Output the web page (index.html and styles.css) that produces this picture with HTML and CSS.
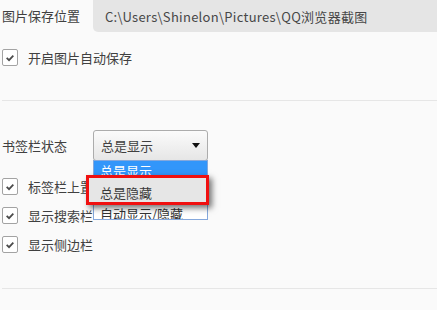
FILE: index.html
```html
<!DOCTYPE html>
<html lang="zh">
<head>
<meta charset="utf-8">
<link rel="stylesheet" href="styles.css">
</head>
<body>
<div class="page">
  <section class="section first">
    <div class="path-row">
      <span class="label">图片保存位置</span>
      <div class="path">C:\Users\Shinelon\Pictures\QQ浏览器截图</div>
    </div>
    <div class="check-row first-check">
      <span class="box"><svg viewBox="0 0 16 16" width="16" height="16"><path d="M4.2 8.3 L6.9 11 L11.8 5.8" fill="none" stroke="#4a4a4a" stroke-width="2"/></svg></span>
      <span>开启图片自动保存</span>
    </div>
  </section>
  <section class="section second">
    <div class="select-row">
      <span class="label">书签栏状态</span>
      <div class="select-wrap">
        <div class="select"><span>总是显示</span><span class="arrow"></span></div>
        <ul class="list">
          <li class="item active">总是显示</li>
          <li class="item mid">总是隐藏</li>
          <li class="item last">自动显示/隐藏</li>
        </ul>
        <div class="highlight"><span>总是隐藏</span></div>
      </div>
    </div>
    <div class="checks">
      <div class="check-row">
        <span class="box"><svg viewBox="0 0 16 16" width="16" height="16"><path d="M4.2 8.3 L6.9 11 L11.8 5.8" fill="none" stroke="#4a4a4a" stroke-width="2"/></svg></span>
        <span>标签栏上置顶</span>
      </div>
      <div class="check-row">
        <span class="box"><svg viewBox="0 0 16 16" width="16" height="16"><path d="M4.2 8.3 L6.9 11 L11.8 5.8" fill="none" stroke="#4a4a4a" stroke-width="2"/></svg></span>
        <span>显示搜索栏</span>
      </div>
      <div class="check-row">
        <span class="box"><svg viewBox="0 0 16 16" width="16" height="16"><path d="M4.2 8.3 L6.9 11 L11.8 5.8" fill="none" stroke="#4a4a4a" stroke-width="2"/></svg></span>
        <span>显示侧边栏</span>
      </div>
    </div>
  </section>
</div>
</body>
</html>
```
FILE: styles.css
```css
* { box-sizing: border-box; }
html, body { margin: 0; padding: 0; }
body {
  background: #fafafa;
  font-family: "Noto Sans CJK SC", "Microsoft YaHei", sans-serif;
  font-size: 13px;
  color: #404040;
  width: 437px;
  height: 310px;
  overflow: hidden;
}
.page { padding-left: 2px; }
.section.first {
  height: 101px;
  border-bottom: 1px solid #e6e6e6;
}
.path-row {
  display: flex;
  align-items: center;
  height: 32px;
}
.label { width: 91px; flex: none; line-height: 16px; }
.path {
  flex: 1;
  height: 32px;
  background: #e5e5e5;
  border-bottom-left-radius: 5px;
  display: flex;
  align-items: center;
  padding-left: 12px;
  color: #474747;
  letter-spacing: 0.28px;
}
.check-row {
  display: flex;
  align-items: center;
  gap: 10px;
  height: 17px;
}
.first-check { margin-top: 17px; }
.box {
  width: 16px;
  height: 17px;
  border: 1px solid #a3a3a3;
  border-radius: 2px;
  background: #fff;
  display: flex;
  align-items: center;
  justify-content: center;
  flex: none;
}
.box svg { display: block; width: 15px; height: 15px; }
.section.second {
  height: 188px;
  border-bottom: 1px solid #e6e6e6;
  padding-top: 29px;
}
.select-row {
  display: flex;
  align-items: center;
  height: 31px;
}
.select-wrap { position: relative; }
.select {
  width: 115px;
  height: 31px;
  border: 1px solid #acacac;
  border-radius: 3px;
  background: linear-gradient(#fbfbfb, #e6e6e6);
  display: flex;
  align-items: center;
  justify-content: space-between;
  padding: 0 7px 0 7px;
}
.arrow {
  width: 0;
  height: 0;
  border-left: 4.5px solid transparent;
  border-right: 4.5px solid transparent;
  border-top: 5px solid #111;
}
.list {
  position: absolute;
  left: 0;
  top: 30px;
  width: 115px;
  margin: 0;
  padding: 0;
  list-style: none;
  background: #fff;
  border: 1px solid #85a8dc;
  height: 60px;
  overflow: hidden;
}
.item {
  height: 19px;
  line-height: 19px;
  padding-left: 6px;
  color: #333;
  overflow: hidden;
}
.item.active { background: #3296fa; color: #fff; }
.item.mid { height: 22px; line-height: 22px; }
.item.last { height: 17px; line-height: 24px; }
.highlight {
  position: absolute;
  left: -7px;
  top: 45px;
  width: 123px;
  height: 30px;
  border: 3px solid #f01010;
  background: #e6e6e6;
  box-shadow: 3px 3px 6px rgba(0,0,0,0.55);
  display: flex;
  align-items: center;
  padding-left: 11px;
  padding-top: 5px;
  color: #3a3a3a;
}
.checks {
  display: flex;
  flex-direction: column;
  gap: 12px;
  margin-top: 17px;
}
```
